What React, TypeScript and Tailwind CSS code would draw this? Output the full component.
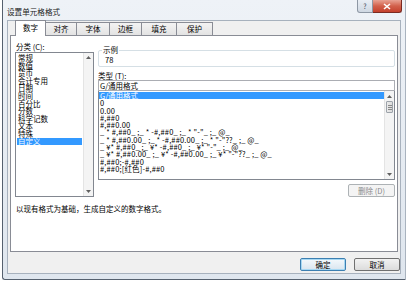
import React from "react";

const categories = ["常规", "数值", "货币", "会计专用", "日期", "时间", "百分比", "分数", "科学记数", "文本", "特殊", "自定义"];

const formats = [
  "G/通用格式",
  "0",
  "0.00",
  "#,##0",
  "#,##0.00",
  '_ * #,##0_ ;_ * -#,##0_ ;_ * "-"_ ;_ @_',
  '_ * #,##0.00_ ;_ * -#,##0.00_ ;_ * "-"??_ ;_ @_',
  '_ ¥* #,##0_ ;_ ¥* -#,##0_ ;_ ¥* "-"_ ;_ @_',
  '_ ¥* #,##0.00_ ;_ ¥* -#,##0.00_ ;_ ¥* "-"??_ ;_ @_',
  "#,##0;-#,##0",
  "#,##0;[红色]-#,##0",
];

const tabs = [
  { label: "数字", w: "w-[31px]" },
  { label: "对齐", w: "w-[31px]" },
  { label: "字体", w: "w-[33px]" },
  { label: "边框", w: "w-[32px]" },
  { label: "填充", w: "w-[35px]" },
  { label: "保护", w: "w-[36px]" },
];

function ScrollArrow({ up }: { up?: boolean }) {
  return (
    <div className="h-[9px] flex items-center justify-center">
      <svg width="5" height="3" viewBox="0 0 5 3">
        <path d={up ? "M0 3 L2.5 0 L5 3 Z" : "M0 0 L2.5 3 L5 0 Z"} fill="#606060" />
      </svg>
    </div>
  );
}

export default function App() {
  return (
    <div className="w-[410px] h-[285px] bg-white pl-[2px] overflow-hidden font-['Noto_Sans_CJK_SC','Noto_Sans',sans-serif] text-[7.5px] text-black">
      {/* Window frame */}
      <div className="w-[404px] h-[280px] bg-gradient-to-b from-[#eef2f7] to-[#dfe6ee] border-l border-b border-r border-l-[#55606e] border-b-[#55606e] border-r-[#a9b3bf] rounded-bl-[3px] flex flex-col">
        {/* Title bar */}
        <div className="h-[20px] flex justify-between">
          <div className="pl-[4px] pt-[7px] leading-[9px] text-[7.6px] text-[#1a1a1a]">设置单元格格式</div>
          <div className="flex h-[13px] mr-[3px]">
            <div className="w-[16px] h-full border border-[#8d97a4] border-t-0 rounded-bl-[3px] bg-gradient-to-b from-[#e9eef4] to-[#cfd8e2] flex items-center justify-center text-[7px] leading-none text-[#3a4656]">?</div>
            <div className="w-[29px] h-full border border-[#7a2a22] border-t-0 border-l-0 rounded-br-[3px] bg-gradient-to-b from-[#e8a293] via-[#d2604b] to-[#c4402c] flex items-center justify-center">
              <svg width="8" height="7" viewBox="0 0 8 7">
                <path d="M1 1 L7 6 M7 1 L1 6" stroke="#ffffff" strokeWidth="1.6" />
              </svg>
            </div>
          </div>
        </div>

        {/* Client area */}
        <div className="ml-[4px] w-[394px] h-[254px] bg-[#f0f0f0] border border-[#a7b1bd] flex flex-col">
          {/* Tabs */}
          <div className="h-[15px] pl-[7px] flex items-end relative z-10">
            {tabs.map((t, i) =>
              i === 0 ? (
                <div key={t.label} className={`${t.w} h-[16px] bg-white border border-[#898c95] border-b-0 flex items-center justify-center pb-[1px]`}>
                  {t.label}
                </div>
              ) : (
                <div key={t.label} className={`${t.w} h-[13px] mb-[1px] bg-gradient-to-b from-[#f3f3f3] to-[#e3e3e3] border border-[#898c95] border-b-0 border-l-0 flex items-center justify-center`}>
                  {t.label}
                </div>
              )
            )}
          </div>

          {/* Tab panel */}
          <div className="ml-[2px] -mt-[1px] w-[388px] h-[217px] bg-white border border-[#898c95] flex flex-col">
            <div className="flex pt-[6px] pl-[4px]">
              {/* Left column */}
              <div className="w-[79px] flex flex-col">
                <div className="h-[10px] pl-[1px] leading-[10px]">分类 (C):</div>
                <div className="h-[145px] border border-[#828790] flex">
                  <div className="flex-1 pt-[1px] pl-[1px]">
                    {categories.map((c) =>
                      c === "自定义" ? (
                        <div key={c} className="h-[7.6px] leading-[7.6px] bg-[#3399ff] text-white pl-[1px] mr-[1px]">{c}</div>
                      ) : (
                        <div key={c} className="h-[7.6px] leading-[7.6px] pl-[1px]">{c}</div>
                      )
                    )}
                  </div>
                  <div className="w-[10px] bg-[#f4f4f4] border-l border-[#e4e4e4] flex flex-col justify-between">
                    <ScrollArrow up />
                    <ScrollArrow />
                  </div>
                </div>
              </div>

              {/* Right column */}
              <div className="ml-[4px] w-[297px] flex flex-col pt-[8px]">
                {/* 示例 group */}
                <div className="h-[17px] border border-[#d5dfe5] rounded-[2px] relative pl-[6px] pt-[5px] leading-[7px]">
                  <span className="absolute -top-[5px] left-[3px] bg-white px-[1px] leading-[8px]">示例</span>
                  78
                </div>
                <div className="h-[13px] pt-[4px] leading-[9px]">类型 (T):</div>
                <div className="h-[11px] border border-[#abadb3] pl-[1px] leading-[9px]">G/通用格式</div>
                <div className="h-[89px] border border-[#828790] border-t-0 flex">
                  <div className="flex-1 pt-[1px] overflow-hidden">
                    {formats.map((f, i) =>
                      i === 0 ? (
                        <div key={f} className="h-[7.3px] leading-[7.3px] bg-[#3399ff] text-white pl-[1px] whitespace-pre">{f}</div>
                      ) : (
                        <div key={f} className="h-[7.3px] leading-[7.3px] pl-[1px] whitespace-pre tracking-[0.15px]">{f}</div>
                      )
                    )}
                  </div>
                  <div className="w-[10px] bg-[#f4f4f4] border-l border-[#e4e4e4] flex flex-col justify-between pt-[1px]">
                    <div className="flex flex-col">
                      <ScrollArrow up />
                      <div className="mx-[1px] h-[12px] border border-[#9da3aa] rounded-[1px] bg-gradient-to-r from-[#eaeaea] to-[#dcdcdc] flex flex-col items-center justify-center gap-[1px]">
                        <div className="w-[4px] h-px bg-[#888]" />
                        <div className="w-[4px] h-px bg-[#888]" />
                        <div className="w-[4px] h-px bg-[#888]" />
                      </div>
                    </div>
                    <ScrollArrow />
                  </div>
                </div>
                <div className="flex justify-end pt-[4px]">
                  <div className="w-[47px] h-[13px] border border-[#adb2b5] rounded-[2px] bg-[#f4f4f4] text-[#8a8a8a] flex items-center justify-center">删除 (D)</div>
                </div>
              </div>
            </div>
            <div className="pl-[5px] pt-[7px] leading-[9px]">以现有格式为基础，生成自定义的数字格式。</div>
          </div>

          {/* Dialog buttons */}
          <div className="flex justify-end gap-[8px] pt-[6px]">
            <div className="w-[46px] h-[13px] border border-[#3c7fb1] rounded-[2px] bg-gradient-to-b from-[#f4f9fc] to-[#d9e5ef] shadow-[inset_0_0_0_1px_#a7d8f3] flex items-center justify-center">确定</div>
            <div className="w-[46px] h-[13px] border border-[#707070] rounded-[2px] bg-gradient-to-b from-[#f2f2f2] to-[#dcdcdc] flex items-center justify-center">取消</div>
          </div>
        </div>
      </div>
    </div>
  );
}
